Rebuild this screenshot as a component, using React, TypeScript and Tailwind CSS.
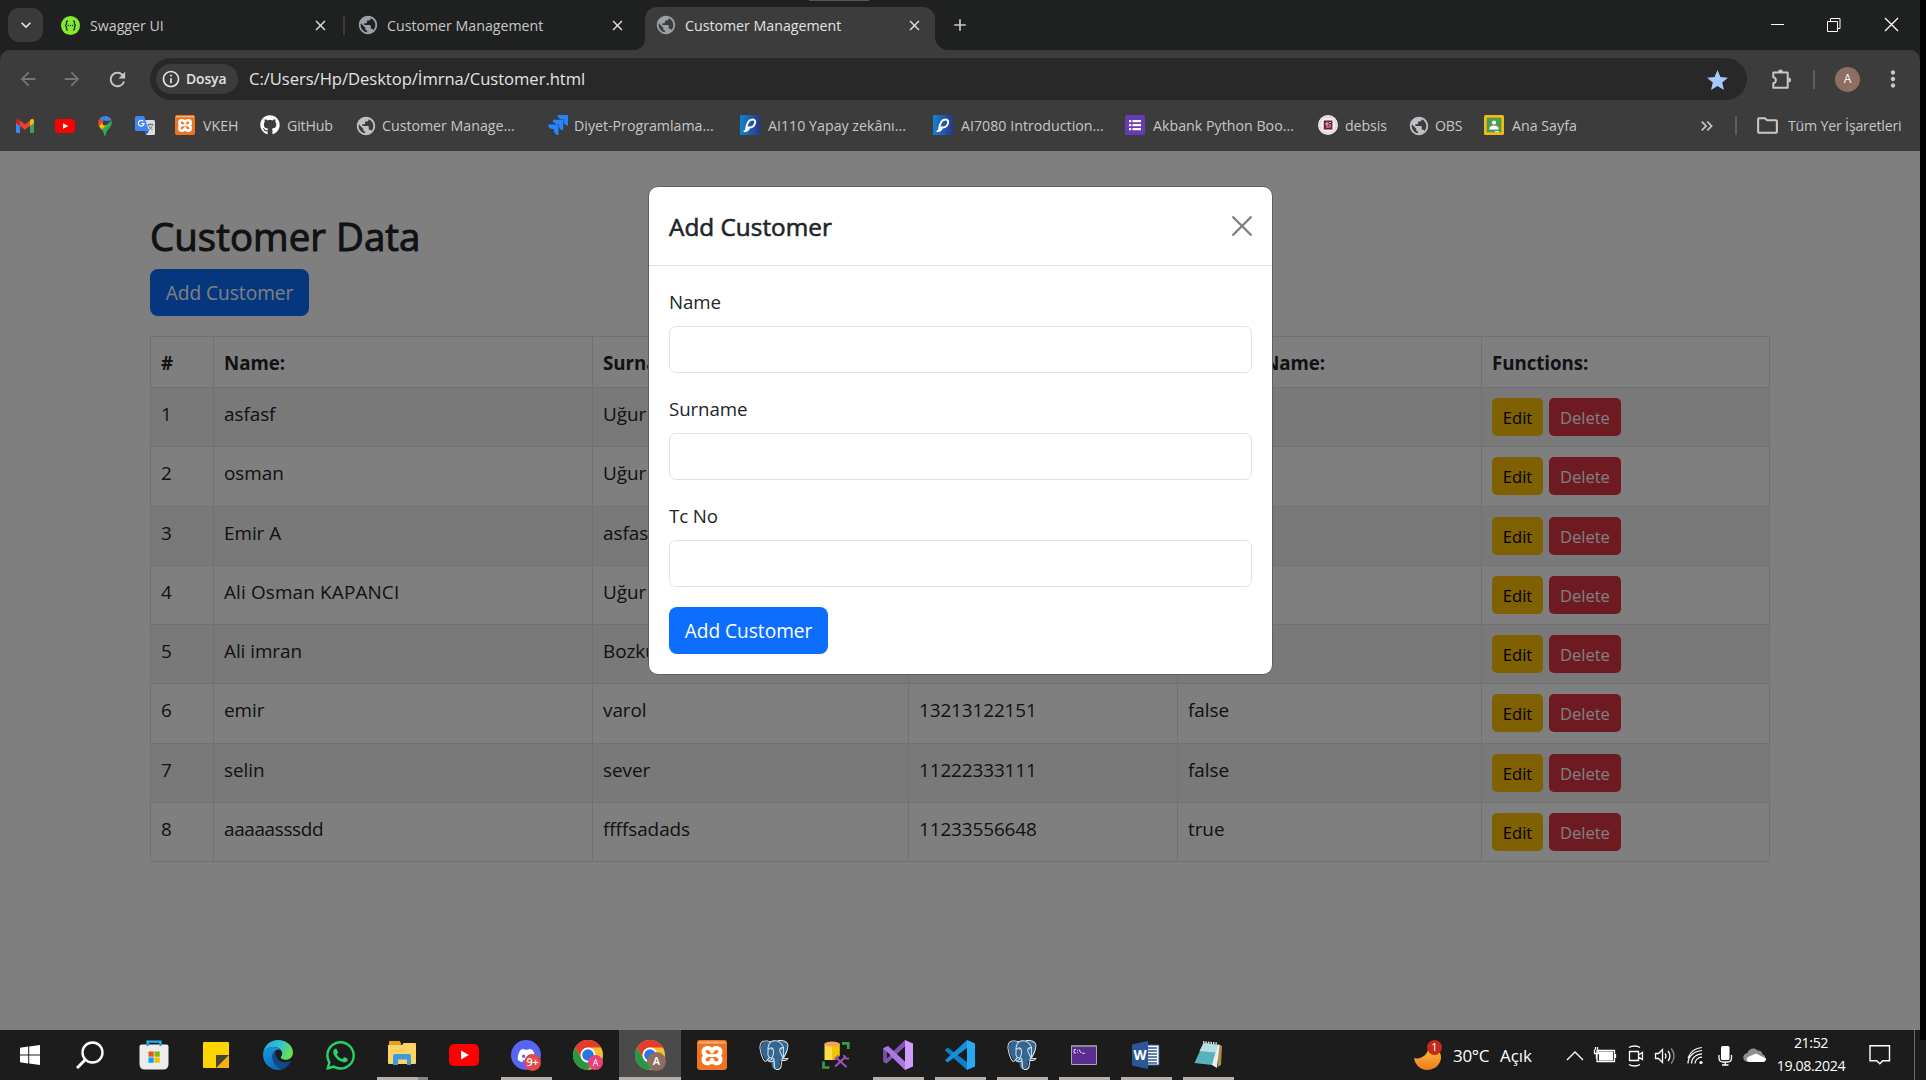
import type { ReactNode } from "react";
import { FaDiscord, FaGithub, FaWhatsapp } from "react-icons/fa";
import {
  MdAdd,
  MdArrowBack,
  MdArrowForward,
  MdClose,
  MdInfoOutline,
  MdKeyboardArrowDown,
  MdKeyboardDoubleArrowRight,
  MdMoreVert,
  MdOutlineFolder,
  MdPublic,
  MdRefresh,
  MdStar,
} from "react-icons/md";
import { SiJira, SiPostgresql } from "react-icons/si";

/* ---------- Icons ---------- */

const Swagger = () => (
  <svg className="size-[19px]" viewBox="0 0 20 20">
    <circle cx="10" cy="10" r="10" fill="#85ea2d" />
    <g fill="none" stroke="#173647" strokeWidth="1.4">
      <path d="M7.4 5.2c-2 0-1.6 1.4-1.6 2.7 0 1.200-.5 2-1.600 2.100 1.100.1 1.600.9 1.600 2.100 0 1.300-.4 2.700 1.600 2.700" />
      <path d="M12.600 5.200c2 0 1.600 1.400 1.600 2.700 0 1.200.5 2 1.600 2.100-1.100.1-1.600.9-1.600 2.100 0 1.300.4 2.700-1.600 2.700" />
    </g>
    <g fill="#173647">
      <circle cx="7.700" cy="10" r=".8" />
      <circle cx="10" cy="10" r=".8" />
      <circle cx="12.300" cy="10" r=".8" />
    </g>
  </svg>
);

const Gmail = () => (
  <svg className="h-[14px] w-[18px]" viewBox="0 0 18 14">
    <path d="M0 2v10.700Q0 14 1.300 14H4V5z" fill="#4285f4" />
    <path d="M18 2v10.700Q18 14 16.700 14H14V5z" fill="#34a853" />
    <path d="M14 1.400V7l4-3V2c0-1.900-1.900-2.600-3.200-1.500z" fill="#fbbc04" />
    <path d="M4 7V1.400l5 3.800 5-3.800V7l-5 3.800z" fill="#ea4335" />
    <path d="M0 2v2l4 3V1.400L3.200.5C1.900-.6 0 .1 0 2z" fill="#c5221f" />
  </svg>
);

const YouTube = ({ className }: { className: string }) => (
  <svg className={className} viewBox="0 0 30 22" preserveAspectRatio="none">
    <rect width="30" height="22" rx="5" fill="#f00" />
    <path d="M12 6.500v9l8-4.500z" fill="#fff" />
  </svg>
);

const Maps = () => (
  <svg className="h-[20px] w-[14px]" viewBox="0 0 14 20">
    <path d="M7 0a7 7 0 0 0-5.400 2.500L5 5.500z" fill="#4285f4" />
    <path d="M7 0c3 0 5.500 1.600 6.500 4.300L9 5 5 5.500z" fill="#4285f4" />
    <path d="M1.600 2.500C-.2 5-.4 7.500 1 10.300L5.300 5.600z" fill="#ea4335" />
    <path d="M13.500 4.300C14.500 8 13 10 11 12.500 9 15 8.400 16 8 18.600 7.700 20.400 6.300 20.400 6 18.600 5.500 16 4.600 14.800 3.600 13.600z" fill="#34a853" />
    <path d="M1 10.300 4.900 5.700l4.600 2.900-5.900 5C2.600 12.300 1.700 11.500 1 10.300z" fill="#fbbc04" />
    <circle cx="7" cy="7" r="2.500" fill="#3c3c3c" />
  </svg>
);

const Translate = () => (
  <svg className="h-[19px] w-[20px]" viewBox="0 0 20 19">
    <path d="M7 4h11.500Q20 4 20 5.500v12q0 1.500-1.500 1.500H11z" fill="#dcdcdc" />
    <path d="M12.500 8.500h6M15.500 7v1.500M17.500 8.500c-.5 3-2.500 4.800-4.500 5.500M13.500 8.800c.5 2.200 2 4 4.200 5" stroke="#6d7f90" fill="none" />
    <path d="M1.500 0H9l5 15H1.500Q0 15 0 13.500v-12Q0 0 1.500 0z" fill="#4285f4" />
    <path d="M9.500 15H14l-3 4z" fill="#2a5cba" />
    <path d="M8.300 5.400A2.800 2.800 0 1 0 9 7.500H6.400" stroke="#fff" strokeWidth="1.200" fill="none" />
  </svg>
);

const Xampp = ({ className }: { className: string }) => (
  <svg className={className} viewBox="0 0 30 30">
    <rect width="30" height="30" rx="3" fill="#ef7422" />
    <path d="M1.500 1.500h27v2h-27z" fill="#f6b07c" />
    <g fill="none" stroke="#fff" strokeWidth="4" strokeLinecap="round" strokeLinejoin="round">
      <path d="M15 11.500C13.500 6.500 6.500 7 6.500 11.500c0 2.500 1.500 3.500 3.500 4-2 .5-3.500 1.800-3.500 4.200 0 4.800 7 5 8.500 0 1.500 5 8.500 4.800 8.500 0 0-2.400-1.500-3.700-3.500-4.200 2-.5 3.500-1.500 3.500-4 0-4.500-7-5-8.500 0z" />
      <path d="M13 15.500h4" strokeWidth="3" />
    </g>
  </svg>
);

const PBook = () => (
  <span className="flex size-[20px] items-center justify-center bg-linear-to-r from-[#0a83cf] to-[#25368a]">
    <svg className="size-[18px]" viewBox="0 0 18 18" fill="none" stroke="#fff" strokeWidth="1.900" strokeLinecap="round">
      <path d="M3.500 15.200c3.500-.7 4.800-2.500 4.300-4M5 14c.5-5.500 2.500-10.500 6.500-10.500 2.500 0 3.300 2 2.300 4.300-1.200 2.700-4 4-6.800 3.700" />
    </svg>
  </span>
);

const Forms = () => (
  <svg className="size-[20px]" viewBox="0 0 20 20">
    <rect width="20" height="20" rx="1.500" fill="#673ab7" />
    <g fill="#fff">
      <path d="M4 5h2.200v2.200H4zM4 9h2.200v2.200H4zM4 13h2.200v2.200H4zM7.500 5H16v2.200H7.500zM7.500 9H16v2.200H7.500zM7.500 13H16v2.200H7.500z" />
    </g>
  </svg>
);

const Debsis = () => (
  <svg className="size-[20px]" viewBox="0 0 20 20">
    <circle cx="10" cy="10" r="10" fill="#f1eef0" />
    <circle cx="10" cy="10" r="8.200" fill="none" stroke="#b9b0b5" strokeDasharray="1.200 1" />
    <rect x="5.800" y="5.500" width="8.600" height="9" fill="#7a1843" />
    <path d="M8 8h2v2H8zM11 7.500h2M12 9v3.500M8 12h3" stroke="#e8d5dd" strokeWidth=".9" fill="none" />
  </svg>
);

const Classroom = () => (
  <svg className="size-[20px]" viewBox="0 0 20 20">
    <rect width="20" height="20" rx="1.500" fill="#f4b912" />
    <rect x="2.700" y="2.700" width="14.600" height="14.600" fill="#4b9b50" />
    <circle cx="10" cy="7.500" r="2.100" fill="#fff" />
    <path d="M5.500 14.500v-1.300c0-2 3-2.800 4.500-2.800s4.500.8 4.500 2.800v1.300z" fill="#fff" />
    <path d="M11 16h4v1.300h-4z" fill="#dcebdc" />
  </svg>
);

const Extension = () => (
  <svg className="h-[22px] w-[22px]" viewBox="0 0 22 22">
    <path d="M2.300 4.500h14.400v15.300H2.300v-4.600c3.400-.4 3.400-5.600 0-6z" fill="none" stroke="#c7c7c7" strokeWidth="2" strokeLinejoin="round" />
    <path d="M7 4a2.500 2.500 0 0 1 5 0zM17.500 9.500a2.500 2.500 0 0 1 0 5z" fill="#c7c7c7" />
  </svg>
);

const Chrome = ({ letter, badge }: { letter: string; badge: string }) => (
  <span className="relative">
    <svg className="size-[30px]" viewBox="0 0 30 30">
      <circle cx="15" cy="15" r="15" fill="#fbc02d" />
      <path d="M2 7.500A15 15 0 0 1 28 7.500H15a7.500 7.500 0 0 0-6.500 11.200z" fill="#e33b2e" />
      <path d="M2 7.500A15 15 0 0 0 15 30l6.500-11.200a7.500 7.500 0 0 1-13 0z" fill="#279847" />
      <circle cx="15" cy="15" r="7.500" fill="#fff" />
      <circle cx="15" cy="15" r="5.800" fill="#2a74e8" />
    </svg>
    <span className={badge}>{letter}</span>
  </span>
);

const Store = () => (
  <svg className="h-[30px] w-[30px]" viewBox="0 0 30 30">
    <path d="M8.600 6V1.600h12.800V6" fill="none" stroke="#23b4ee" strokeWidth="2.400" />
    <path d="M.5 6.500Q.5 4.500 2.500 4.500h25q2 0 2 2V24q0 5.500-5.500 5.500H6Q.5 29.500.5 24z" fill="#ececec" />
    <path d="M8.600 4V6M21.400 4V6" stroke="#1390d0" strokeWidth="2" />
    <path d="M9.500 11.500h5.200v5.200H9.500z" fill="#f25022" />
    <path d="M15.500 11.500h5.200v5.200h-5.200z" fill="#7fba00" />
    <path d="M9.500 17.500h5.200v5.200H9.500z" fill="#00a4ef" />
    <path d="M15.500 17.500h5.200v5.200h-5.200z" fill="#ffb900" />
  </svg>
);

const Sticky = () => (
  <svg className="size-[26px]" viewBox="0 0 26 26">
    <rect width="26" height="26" rx="1" fill="#ffd500" />
    <path d="M13 26 26 13v13z" fill="#f4b013" />
    <path d="M13 26V13h13z" fill="#46423a" />
  </svg>
);

const Edge = () => (
  <svg className="size-[30px]" viewBox="0 0 30 30">
    <defs>
      <linearGradient id="edgeTop" x1="0" y1="0" x2="1" y2=".3">
        <stop offset="0" stopColor="#1ea5e0" />
        <stop offset=".6" stopColor="#35c1cf" />
        <stop offset="1" stopColor="#66e04f" />
      </linearGradient>
      <linearGradient id="edgeLeft" x1="0" y1="0" x2=".6" y2="1">
        <stop offset="0" stopColor="#1b9de2" />
        <stop offset="1" stopColor="#1067bd" />
      </linearGradient>
    </defs>
    <path d="M.2 13C1.200 5.200 7.500 0 15 0c8.500 0 15 5.600 15 12.500 0 4.400-3.300 7.300-7.300 7.300-3 0-5-1.100-5-2.300 0-.9 1.500-1.500 1.500-3.900C19.200 10 15.700 7 10.800 7 6 7 2 9.500.2 13z" fill="url(#edgeTop)" />
    <path d="M.2 13C2 9.500 6 7 10.800 7c3 0 5.300 1 6.700 2.500-4.500-.8-8 2.500-8 7C9.500 23 14 28 20 29.100A15 15 0 0 1 .2 13z" fill="url(#edgeLeft)" />
    <path d="M9.500 16.500c0-2.500 1.300-4.600 3.300-5.800-1.300 4.500 1.500 11.500 9 11.500 2.200 0 4-.6 5.300-1.300.5-.2 1 .2.700.7A15 15 0 0 1 20 29.100C14 29.500 9.500 23 9.500 16.500z" fill="#114a8b" />
  </svg>
);

const Explorer = () => (
  <svg className="h-[28px] w-[28px]" viewBox="0 0 28 28">
    <path d="M1 1q0-1 1-1h9.500l1.500 2v4H1z" fill="#e2a21c" />
    <path d="M0 4h14l1.500-2H27q1 0 1 1v19q0 1-1 1H1q-1 0-1-1z" fill="#fcd364" />
    <path d="M5 22v-7q0-2 2-2h14q2 0 2 2v9h-4v-5.500h-9V24H5z" fill="#3f9ad9" />
  </svg>
);

const DbTool = () => (
  <svg className="size-[28px]" viewBox="0 0 28 28">
    <path d="M2.500 2.500h15V15L13 19H2.500z" fill="#fddb4a" />
    <path d="M10 2.500h7.500V15L13 19h-3z" fill="#f5c400" />
    <ellipse cx="10" cy="3" rx="7.500" ry="2.600" fill="#eda45a" />
    <path d="M20 2.300h6.300V8M1.500 20.500v6h6" fill="none" stroke="#3b9a47" strokeWidth="2.700" />
    <path d="m13 25.500 11-10M14.500 17l10 9M12.500 18.500l4-4M22 14c0 3 2 4 5 3.500" fill="none" stroke="#a050bd" strokeWidth="2" />
  </svg>
);

const VisualStudio = () => (
  <svg className="size-[30px]" viewBox="0 0 30 30">
    <path d="m0 8.500 3.500-2 8 8.500-8 8.500-3.500-2z" fill="#71509f" />
    <path d="M4 11.500v7L7.500 15z" fill="#1c1c1c" />
    <path d="m3.500 23.500 18.500-17V0L9.500 12 0 21.500z" fill="#8054b8" />
    <path d="M4 11.500v7L7.500 15z" fill="#1c1c1c" />
    <path d="m22 0 8 3.500v23L22 30z" fill="#cf9bfc" />
    <path d="M0 8.500 3.500 6.500 5.500 6.200 22 21.500V30z" fill="#a878de" />
    <path d="M22 8.500v12.500L15.500 15z" fill="#1c1c1c" />
    <path d="M4 11.800v6.400L7.200 15z" fill="#1c1c1c" />
  </svg>
);

const VsCode = () => (
  <svg className="size-[30px]" viewBox="0 0 30 30">
    <path d="m0 9.800 2.500-2.200L22 22v8L.3 10.800z" fill="#0f7fc9" />
    <path d="M0 20.200 22 0v8L2.500 22.400z" fill="#1590dd" />
    <path d="m22 0 8 3.500v23L22 30z" fill="#29a8f4" />
  </svg>
);

const Cmd = () => (
  <svg className="h-[20px] w-[26px]" viewBox="0 0 26 20">
    <path d="M.5.500h25v19H.5z" fill="#5c2d91" stroke="#a7a7a7" />
    <path d="M0 0h26v2H0z" fill="#8c8c8c" />
    <path d="M5 4.500H3.200V8H5M6.500 5v.8M6.500 7.200V8M8 4.500 10 8M11 8.300h3" stroke="#fff" strokeWidth=".8" fill="none" />
  </svg>
);

const Word = () => (
  <span className="relative flex h-[28px] w-[28px] items-center">
    <svg className="size-[28px]" viewBox="0 0 28 28">
      <path d="M15 4h12v20H15z" fill="#fff" stroke="#2b579a" />
      <path d="M16 7h9M16 10h9M16 13h9M16 16h9M16 19h9M16 22h9" stroke="#2b579a" strokeWidth="1.300" />
      <path d="M0 3.500 16 0v28L0 24.500z" fill="#2b579a" />
    </svg>
    <span className="absolute top-[4px] left-[1.500px] font-['Open_Sans'] text-[13.500px] leading-[20px] font-bold text-white">W</span>
  </span>
);

const Notepad = () => (
  <svg className="size-[28px]" viewBox="0 0 28 28">
    <path d="m24 3 4 2-1 19-3 2z" fill="#b08a45" />
    <path d="m9.500 2 16 2-2.500 23-5-3z" fill="#e7eff0" />
    <path d="m9.500 2 14 2-5.500 20L.5 22z" fill="#57b2bd" />
    <path d="m9.500 2 14 2-2 7.500L5.500 10z" fill="#b8e0e3" />
    <path d="m9 1 15 1.500" stroke="#ddd" strokeWidth="2" strokeDasharray="1.500 1" />
  </svg>
);

const Postgres = () => (
  <span className="relative size-[30px]">
    <svg className="size-[30px]" viewBox="0 0 24 24" fill="#336791">
      <path d="M1.500 6C1.500 2 4.500.5 8 1.200 10.500.2 13 .2 15.200 1c3-1 7-.3 7.600 2.800.5 3.500-1 7.200-2.800 10.200l2.700.5c-1 1.800-3.700 2.500-5.700 2 0 2.500 0 5.500-2 6.500-3 1.200-4.800-.8-5-3.500L9.800 16C8 17.200 5.500 16.800 4.300 14.500 2.800 12 1.500 9 1.500 6z" />
    </svg>
    <SiPostgresql className="absolute inset-0 size-[30px] text-[#e8eef3]" />
  </span>
);

/* ---------- Browser chrome ---------- */

type TabProps = { icon: ReactNode; title: string; box: string };

const Tab = ({ icon, title, box }: TabProps) => (
  <div className={box}>
    {icon}
    <span className="ml-[10px] grow pt-[1px] whitespace-nowrap">{title}</span>
    <MdClose className="size-[17px] text-[#e0e0e0]" />
  </div>
);

const globe = <MdPublic className="-mx-[2px] size-[22px] text-[#9aa0a6]" />;

const TabStrip = () => (
  <div className="flex h-[50px] items-start bg-[#1f2120] pl-[8px] text-[14.2px] text-[#c7c7c7]">
    <div className="mt-[8px] flex h-[34px] w-[35px] items-center justify-center rounded-[11px] bg-[#3a3a3a]">
      <MdKeyboardArrowDown className="size-[20px] text-[#e3e3e3]" />
    </div>
    <Tab icon={<Swagger />} title="Swagger UI" box="ml-[18px] flex h-[50px] w-[268px] items-center" />
    <div className="mt-[16px] ml-[14px] h-[19px] w-[2px] bg-[#3c3c3c]" />
    <Tab icon={globe} title="Customer Management" box="ml-[14px] flex h-[50px] w-[267px] items-center" />
    <div className="relative ml-[19px] h-[50px] w-[290px] pt-[7px]">
      <div className="absolute bottom-0 -left-[12px] size-[12px] bg-[radial-gradient(circle_at_0_0,#1f2120_12px,#3c3c3c_12.5px)]" />
      <div className="absolute -right-[14px] bottom-0 size-[14px] bg-[radial-gradient(circle_at_100%_0,#1f2120_14px,#3c3c3c_14.5px)]" />
      <div className="h-[43px] rounded-t-[12px] bg-[#3c3c3c] pl-[12px] text-[#e3e3e3]">
        <Tab icon={globe} title="Customer Management" box="flex h-[36px] w-[266px] items-center" />
      </div>
      <div className="absolute top-0 left-[164px] h-[1px] w-[60px] bg-[#5a5353]" />
    </div>
    <MdAdd className="mt-[15px] ml-[15px] size-[20px] text-[#c7c7c7]" />
    <svg className="mt-[17px] ml-[801px] h-[16px] w-[130px]" viewBox="0 0 130 16" fill="none" stroke="#fff">
      <path d="M0 7.500h13M56.500 4.500h10v10h-10zM59.500 4V1.500h9.500v10h-2.500" />
      <path d="m114 1 13 13m0-13-13 13" strokeWidth="1.300" />
    </svg>
  </div>
);

const AddressBar = () => (
  <div className="bg-[#1f2120]">
    <div className="flex h-[58px] items-center rounded-t-[10px] bg-[#3c3c3c] pl-[17px]">
      <MdArrowBack className="size-[22px] text-[#757575]" />
      <MdArrowForward className="ml-[22px] size-[22px] text-[#757575]" />
      <MdRefresh className="ml-[23px] size-[23px] text-[#c7c7c7]" />
      <div className="ml-[21px] flex h-[42px] w-[1597px] items-center rounded-full bg-[#282828] pr-[17px] pl-[6px]">
        <div className="flex h-[30px] w-[82px] items-center rounded-full bg-[#3c3c3c] pl-[5px] text-[#e3e3e3]">
          <MdInfoOutline className="size-[20px]" />
          <span className="ml-[5px] text-[13.9px] font-semibold tracking-[-0.1px]">Dosya</span>
        </div>
        <span className="ml-[11px] grow pt-[1px] text-[16.6px] tracking-[-0.04px] text-[#e3e3e3]">
          C:/Users/Hp/Desktop/İmrna/Customer.html
        </span>
        <MdStar className="mt-[2px] size-[25px] text-[#a8c7fa]" />
      </div>
      <div className="ml-[24px]">
        <Extension />
      </div>
      <div className="ml-[20px] h-[19px] w-[2px] bg-[#5e5e5e]" />
      <div className="ml-[20px] flex size-[25px] items-center justify-center rounded-full bg-[#8d6e63] text-[12px] text-white">A</div>
      <MdMoreVert className="ml-[20px] size-[26px] text-[#c7c7c7]" />
    </div>
  </div>
);

type Bookmark = { icon: ReactNode; label?: string; box: string; text?: string };

const gap = "ml-[8px] tracking-[0.02px]";
const bookmarks: Bookmark[] = [
  { icon: <Gmail />, box: "flex w-[39px] items-center" },
  { icon: <YouTube className="h-[14px] w-[20px]" />, box: "flex w-[43px] items-center" },
  { icon: <Maps />, box: "flex w-[37px] items-center" },
  { icon: <Translate />, box: "flex w-[40px] items-center" },
  { icon: <Xampp className="size-[20px]" />, label: "VKEH", box: "flex w-[85px] items-center", text: "ml-[8px]" },
  { icon: <FaGithub className="size-[20px] text-white" />, label: "GitHub", box: "flex w-[95px] items-center", text: "ml-[7px] tracking-[-0.15px]" },
  { icon: <MdPublic className="size-[22px] text-[#bdc1c6]" />, label: "Customer Manage...", box: "flex w-[193px] items-center", text: "ml-[5px]" },
  { icon: <SiJira className="size-[20px] text-[#2684ff]" />, label: "Diyet-Programlama...", box: "flex w-[192px] items-center", text: "ml-[6px]" },
  { icon: <PBook />, label: "AI110 Yapay zekânı...", box: "flex w-[193px] items-center", text: gap },
  { icon: <PBook />, label: "AI7080 Introduction...", box: "flex w-[192px] items-center", text: gap },
  { icon: <Forms />, label: "Akbank Python Boo...", box: "flex w-[193px] items-center", text: gap },
  { icon: <Debsis />, label: "debsis", box: "flex w-[90px] items-center", text: "ml-[7px] tracking-[-0.1px]" },
  { icon: <MdPublic className="size-[22px] text-[#bdc1c6]" />, label: "OBS", box: "flex w-[76px] items-center", text: "ml-[5px] tracking-[-0.2px]" },
  { icon: <Classroom />, label: "Ana Sayfa", box: "flex w-[213px] items-center", text: gap },
];

const BookmarksBar = () => (
  <div className="flex h-[43px] items-center bg-[#3c3c3c] pb-[8px] pl-[16px] text-[14.2px] whitespace-nowrap text-[#c7c7c7]">
    {bookmarks.map((b, i) => (
      <div key={i} className={b.box}>
        {b.icon}
        {b.label && <span className={b.text}>{b.label}</span>}
      </div>
    ))}
    <MdKeyboardDoubleArrowRight className="size-[20px]" />
    <div className="ml-[18px] h-[19px] w-[2px] bg-[#5e5e5e]" />
    <MdOutlineFolder className="ml-[18px] size-[25px]" />
    <span className="ml-[8px] tracking-[-0.2px]">Tüm Yer İşaretleri</span>
  </div>
);

/* ---------- Page ---------- */

type Customer = { name: string; surname: string; tc: string; realName: string; row: string };

const plain = "flex h-[59px] border-b border-[#dee2e6]";
const striped = "flex h-[59px] border-b border-[#dee2e6] bg-[#f2f2f2]";
const plainTall = "flex h-[60px] border-b border-[#dee2e6]";

const customers: Customer[] = [
  { name: "asfasf", surname: "Uğur", tc: "11111111111", realName: "false", row: striped },
  { name: "osman", surname: "Uğur", tc: "11111111111", realName: "false", row: plainTall },
  { name: "Emir A", surname: "asfasf", tc: "11111111111", realName: "false", row: striped },
  { name: "Ali Osman KAPANCI", surname: "Uğur", tc: "11111111111", realName: "false", row: plain },
  { name: "Ali imran", surname: "Bozkurt", tc: "11111111111", realName: "false", row: striped },
  { name: "emir", surname: "varol", tc: "13213122151", realName: "false", row: plainTall },
  { name: "selin", surname: "sever", tc: "11222333111", realName: "false", row: striped },
  { name: "aaaaasssdd", surname: "ffffsadads", tc: "11233556648", realName: "true", row: plain },
];

const c0 = "w-[63px] shrink-0 border-r border-[#dee2e6] pt-[11px] pl-[10px]";
const c1 = "w-[379px] shrink-0 border-r border-[#dee2e6] pt-[11px] pl-[10px]";
const c2 = "w-[316px] shrink-0 border-r border-[#dee2e6] pt-[11px] pl-[10px]";
const c3 = "w-[269px] shrink-0 border-r border-[#dee2e6] pt-[11px] pl-[10px]";
const c4 = "w-[304px] shrink-0 border-r border-[#dee2e6] pt-[11px] pl-[10px]";

const CustomerTable = () => (
  <div className="mt-[20px] w-[1620px] border-t border-l border-[#dee2e6] text-[18.900px] leading-[30px] tracking-[-0.05px]">
    <div className="flex h-[51px] border-b border-[#dee2e6] text-[18.7px] font-bold">
      <div className={c0}>#</div>
      <div className={c1}>Name:</div>
      <div className={c2}>Surname:</div>
      <div className={c3}>Tc No:</div>
      <div className={c4}>
        <span className="ml-[11px]">Is Real Name:</span>
      </div>
      <div className="grow border-r border-[#dee2e6] pt-[11px] pl-[10px]">Functions:</div>
    </div>
    {customers.map((c, i) => (
      <div key={i} className={c.row}>
        <div className={c0}>{i + 1}</div>
        <div className={c1}>
          <span className={c.name.length === 10 ? "tracking-[-0.35px]" : c.name.length > 10 ? "tracking-[0.15px]" : ""}>{c.name}</span>
        </div>
        <div className={c2}>{c.surname}</div>
        <div className={c3}>
          <span className="tracking-[-0.1px]">{c.tc}</span>
        </div>
        <div className={c4}>{c.realName}</div>
        <div className="flex grow gap-[6px] border-r border-[#dee2e6] pt-[10px] pl-[10px] text-[16.6px]">
          <button className="h-[38px] w-[51px] rounded-[5px] bg-[#ffc107] pt-[1px] text-black">Edit</button>
          <button className="h-[38px] w-[72px] rounded-[5px] bg-[#dc3545] pt-[1px] text-white">Delete</button>
        </div>
      </div>
    ))}
  </div>
);

const AddButton = () => (
  <button className="h-[47px] w-[159px] rounded-[8px] bg-[#0d6efd] pt-[2px] text-[19.1px] text-white">Add Customer</button>
);

const Field = ({ label }: { label: string }) => (
  <label className="mb-[21px] block">
    <span className="block text-[18.7px] leading-[30px] tracking-[-0.1px]">{label}</span>
    <input className="mt-[9px] block h-[47px] w-full rounded-[7px] border border-[#dee2e6] bg-white" />
  </label>
);

const Modal = () => (
  <div className="absolute top-[35px] left-[648px] h-[489px] w-[625px] rounded-[10px] border border-[#5f5f5f] bg-white">
    <div className="flex h-[79px] items-center justify-between border-b border-[#dee2e6] px-[20px]">
      <h5 className="pt-[3px] text-[24.3px] tracking-[0.03px] [-webkit-text-stroke:0.6px_#212529]">Add Customer</h5>
      <svg className="mb-[1px] size-[20px]" viewBox="0 0 20 20" stroke="#7f7f7f" strokeWidth="2.300" strokeLinecap="round">
        <path d="m1.200 1.200 17.600 17.600m0-17.600L1.200 18.800" />
      </svg>
    </div>
    <div className="px-[20px] pt-[21px]">
      <Field label="Name" />
      <Field label="Surname" />
      <Field label="Tc No" />
      <div className="-mt-[1px]">
        <AddButton />
      </div>
    </div>
  </div>
);

const Page = () => (
  <div className="relative h-[879px] bg-white pt-[60px] pl-[150px] text-[#212529]">
    <h2 className="h-[58px] pt-[1px] text-[38.4px] leading-[48px] tracking-[0.05px] [-webkit-text-stroke:1px_#212529]">Customer Data</h2>
    <AddButton />
    <CustomerTable />
    <div className="absolute inset-0 bg-black/50" />
    <Modal />
  </div>
);

/* ---------- Taskbar ---------- */

const Slot = ({ children, line, active }: { children: ReactNode; line?: string; active?: boolean }) => (
  <div className={active ? "flex h-[50px] w-[62px] flex-col items-center bg-[#4a4a4a]" : "flex h-[50px] w-[62px] flex-col items-center"}>
    <div className="flex h-[47px] items-center pt-[3px]">{children}</div>
    {line && <div className={line} />}
  </div>
);

const open = "h-[3px] w-[51px] bg-[#b4b0ae]";

const Tray = () => (
  <svg className="ml-[32px] h-[34px] w-[202px]" viewBox="0 0 202 34" fill="none" stroke="#fff" strokeWidth="1.300">
    <path d="m1 22 8-8 8 8" />
    <path d="M33 13.500h14v9H33z" fill="#fff" strokeWidth="0" />
    <path d="M31 12.500h17.500v11H31zM49.500 16v4M28.500 11.500v4h4v-4M29.500 9v2.500M31.500 9v2.500M30.500 15.500v5" />
    <path d="M63.500 13.500h9v9h-9zM72.500 17l4-2.500v7l-4-2.500" />
    <path d="M63 9.500c3-2 8-2 11 0M63 26.500c3 2 8 2 11 0" />
    <path d="M89.500 15.500h3l4-4v13l-4-4h-3zM99 15.500c1.300 1.300 1.300 3.700 0 5M102 13c2.500 2.700 2.500 7.300 0 10" />
    <path d="M105 10.500c4 4 4 11 0 15" stroke="#8a8a8a" />
    <path d="M122 25.500c0-7 6-12.500 14-13M125.500 25.500c0-5.500 4.500-9.500 10.500-9.700M129 25.500c0-3.500 3-6.200 7-6.300M122 20c2-5.500 7-10 14-10.500" strokeWidth="1.200" />
    <circle cx="135" cy="24.500" r="1.600" fill="#fff" strokeWidth="0" />
    <g transform="translate(1 -1)">
      <rect x="154" y="9" width="8.500" height="14" rx="1.500" fill="#fff" strokeWidth="0" />
      <path d="M152 18v3q0 4 4 4h4.500q4 0 4-4v-3M158.200 25v3M155 28h6.500" />
    </g>
    <g transform="translate(2 -1)">
      <path d="M180 25a4.500 4.500 0 0 1-.5-9c1-4.500 7-6 10-2.500 3.500-.5 5 2 5 4 4 .8 4 6.500 0 7.500z" fill="#8f8f8f" strokeWidth="0" />
      <path d="M181 25c-3-1-3-4.500 0-5.500l7-3 10 5c0 2-1 3.500-3 3.500z" fill="#fff" strokeWidth="0" />
    </g>
  </svg>
);

const Taskbar = () => (
  <div className="flex h-[50px] bg-[#1c1c1c] text-white">
    <div className="-ml-[1px]">
      <Slot>
        <svg className="size-[20px]" viewBox="0 0 20 20" fill="#fff">
          <path d="M0 2.800 8.200 1.600v7.900H0zM9.200 1.500 20 0v9.500H9.200zM0 10.500h8.200v7.900L0 17.200zM9.200 10.500H20V20L9.200 18.500z" />
        </svg>
      </Slot>
    </div>
    <Slot>
      <svg className="mr-[4px] size-[28px]" viewBox="0 0 28 28" fill="none" stroke="#fff" strokeWidth="2.400">
        <circle cx="16.500" cy="11.500" r="10" />
        <path d="M9.500 18.500 1 27" strokeWidth="3" />
      </svg>
    </Slot>
    <Slot><Store /></Slot>
    <Slot><Sticky /></Slot>
    <Slot><Edge /></Slot>
    <Slot><FaWhatsapp className="size-[33px] text-[#25d366]" /></Slot>
    <Slot line="h-[3px] w-[51px] bg-linear-to-r from-[#b4b0ae] from-80% to-[#858585] to-80%"><Explorer /></Slot>
    <Slot><YouTube className="h-[22px] w-[30px]" /></Slot>
    <Slot line={open}>
      <span className="relative flex size-[30px] items-center justify-center rounded-full bg-[#5865f2]">
        <FaDiscord className="size-[19px] text-white" />
        <span className="absolute top-[14px] left-[13px] flex size-[17px] items-center justify-center rounded-full bg-[#e5484d] text-[11px] font-semibold tracking-tight">9+</span>
      </span>
    </Slot>
    <Slot>
      <Chrome letter="A" badge="absolute top-[15px] left-[15px] flex size-[15px] items-center justify-center rounded-full bg-[#ea3f7b] text-[9px]" />
    </Slot>
    <Slot active line="h-[3px] w-full bg-[#b4b0ae]">
      <Chrome letter="A" badge="absolute top-[12px] left-[12px] flex size-[19px] items-center justify-center rounded-full bg-[#8d6e63] text-[11px] font-semibold" />
    </Slot>
    <Slot>
      <Xampp className="size-[30px]" />
    </Slot>
    <Slot><Postgres /></Slot>
    <Slot><DbTool /></Slot>
    <Slot line={open}><VisualStudio /></Slot>
    <Slot line={open}><VsCode /></Slot>
    <Slot line={open}><Postgres /></Slot>
    <Slot line={open}><Cmd /></Slot>
    <Slot line={open}><Word /></Slot>
    <Slot line={open}><Notepad /></Slot>
    <div className="flex grow items-center">
      <span className="relative ml-[174px] h-[30px] w-[30px]">
        <svg className="size-[30px]" viewBox="0 0 30 30">
          <defs>
            <linearGradient id="moon" x1="0" y1="0" x2="0" y2="1">
              <stop offset="0" stopColor="#fdc03b" />
              <stop offset="1" stopColor="#ee7a1e" />
            </linearGradient>
          </defs>
          <path d="M1 18c7 2 14-3 14.500-11C24 7 28.500 12 28 18c-.6 7-6.500 12-14 12C7.500 30 2 25 1 18z" fill="url(#moon)" />
        </svg>
        <span className="absolute top-[0px] left-[14px] flex size-[15px] items-center justify-center rounded-full bg-[#c42b1c] text-[11px]">1</span>
      </span>
      <span className="mt-[2px] ml-[10px] w-[47px] text-[17px] tracking-[-0.3px]">30°C</span>
      <span className="mt-[2px] w-[34px] text-[17px] tracking-[-0.1px]">Açık</span>
      <Tray />
    </div>
    <div className="mt-[-1px] mr-[23px] flex w-[70px] flex-col items-center pt-[3px] text-[14.2px] leading-[22.500px] tracking-[-0.4px]">
      <span>21:52</span>
      <span>19.08.2024</span>
    </div>
    <svg className="mt-[14px] h-[22px] w-[22px]" viewBox="0 0 22 22" fill="none" stroke="#fff" strokeWidth="1.400">
      <path d="M1 1.700h19.500v15h-6.700l-3 3-3-3H1z" />
    </svg>
    <div className="ml-[23px] w-[1px] bg-[#6a6a6a]" />
    <div className="w-[11px]" />
  </div>
);

export default function App() {
  return (
    <div className="h-[1080px] w-[1926px] overflow-hidden bg-black font-['Open_Sans',sans-serif]">
      <div className="h-[1030px] w-[1920px]">
        <TabStrip />
        <AddressBar />
        <BookmarksBar />
        <Page />
      </div>
      <div className="relative">
        <Taskbar />
        <div className="absolute top-0 right-0 h-[10px] w-[6px] bg-black" />
      </div>
    </div>
  );
}
